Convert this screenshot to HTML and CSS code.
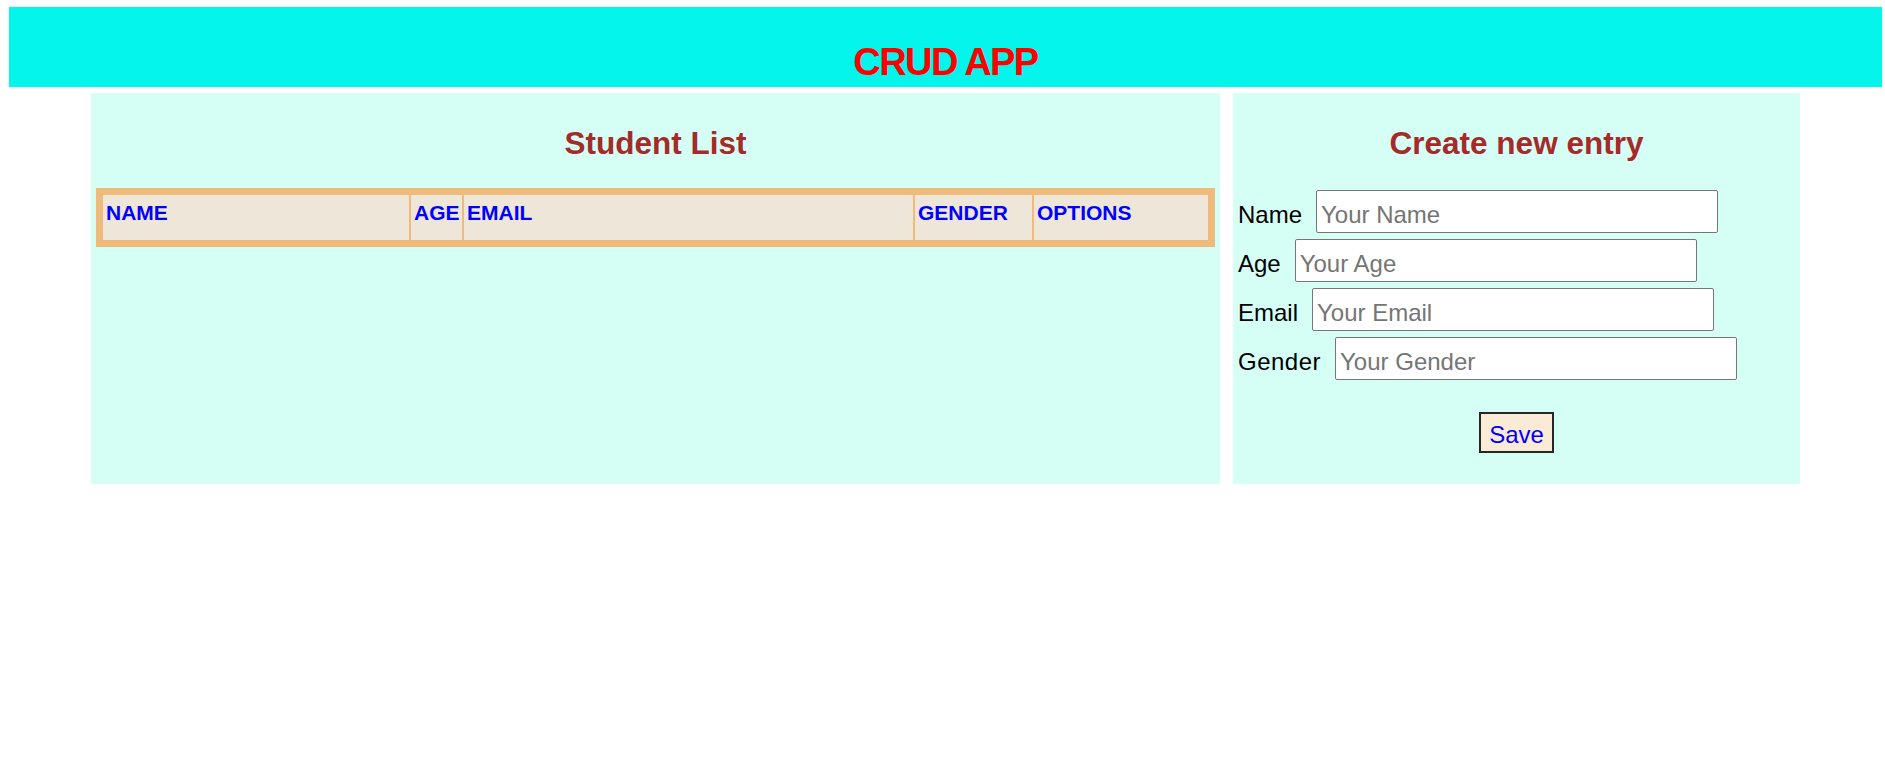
FILE: index.html
```html
<!DOCTYPE html>
<html lang="en">
<head>
<meta charset="utf-8">
<title>CRUD APP</title>
<link rel="stylesheet" href="styles.css">
</head>
<body>
<header class="header">
  <h1 class="title">CRUD APP</h1>
</header>
<main class="main">
  <section class="panel">
    <h2 class="panel-title">Student List</h2>
    <table class="students">
      <thead>
        <tr>
          <th class="col-name">NAME</th>
          <th class="col-age">AGE</th>
          <th class="col-email">EMAIL</th>
          <th class="col-gender">GENDER</th>
          <th class="col-options">OPTIONS</th>
        </tr>
      </thead>
      <tbody></tbody>
    </table>
  </section>
  <section class="panel">
    <h2 class="panel-title">Create new entry</h2>
    <form class="form">
      <div class="row"><label class="label" for="name">Name</label><input class="field" id="name" type="text" placeholder="Your Name"></div>
      <div class="row"><label class="label" for="age">Age</label><input class="field" id="age" type="text" placeholder="Your Age"></div>
      <div class="row"><label class="label" for="email">Email</label><input class="field" id="email" type="text" placeholder="Your Email"></div>
      <div class="row"><label class="label label-wide" for="gender">Gender</label><input class="field" id="gender" type="text" placeholder="Your Gender"></div>
      <div class="actions"><button class="save" type="button">Save</button></div>
    </form>
  </section>
</main>
</body>
</html>
```
FILE: styles.css
```css
body {
  margin: 0;
  padding: 7px 3px 0 9px;
  background: #ffffff;
  font-family: "Liberation Sans", Arial, sans-serif;
}

.header {
  height: 80px;
  box-sizing: border-box;
  padding-top: 33px;
  background: #04f5ec;
  text-align: center;
}

.title {
  margin: 0;
  font-size: 38px;
  line-height: 44px;
  font-weight: bold;
  letter-spacing: -1.6px;
  color: #ff0000;
}

.main {
  display: grid;
  grid-template-columns: 1129px 567px;
  gap: 13px;
  margin: 6px 82px 0;
}

.panel {
  background: #d5fef4;
  padding: 5px;
  box-sizing: border-box;
}

.panel-title {
  margin: 27px 0;
  font-size: 31.5px;
  line-height: 36px;
  font-weight: bold;
  text-align: center;
  color: #a52a2a;
}

.students {
  width: 100%;
  table-layout: fixed;
  border: 5px solid #eebb7d;
  border-spacing: 2px;
  background: #eebb7d;
}

.students th {
  height: 45px;
  box-sizing: border-box;
  padding: 6px 3px 0;
  vertical-align: top;
  text-align: left;
  font-size: 21px;
  line-height: 24px;
  font-weight: bold;
  color: #0000ff;
  background: #efe6da;
  white-space: nowrap;
}

.col-name { width: 306px; }
.col-age { width: 51px; }
.col-email { width: 449px; }
.col-gender { width: 117px; }

.form {
  display: flex;
  flex-direction: column;
  gap: 6px;
  padding-top: 2px;
}

.row {
  display: flex;
  align-items: baseline;
  gap: 14px;
}

.label {
  font-size: 24px;
  color: #000000;
}

.label-wide {
  letter-spacing: 0.5px;
}

.field {
  width: 402px;
  height: 43px;
  box-sizing: border-box;
  margin: 0;
  padding: 6px 4px 0;
  border: 1px solid #767676;
  border-radius: 2px;
  background: #ffffff;
  font-family: "Liberation Sans", Arial, sans-serif;
  font-size: 24px;
  color: #000000;
}

.field::placeholder {
  color: #757575;
}

.actions {
  margin-top: 26px;
  margin-bottom: 26px;
  text-align: center;
}

.save {
  height: 41px;
  box-sizing: border-box;
  padding: 4px 8px 0;
  border: 2px solid #262626;
  background: #faebd7;
  color: #0000ff;
  font-family: "Liberation Sans", Arial, sans-serif;
  font-size: 24px;
}
```
